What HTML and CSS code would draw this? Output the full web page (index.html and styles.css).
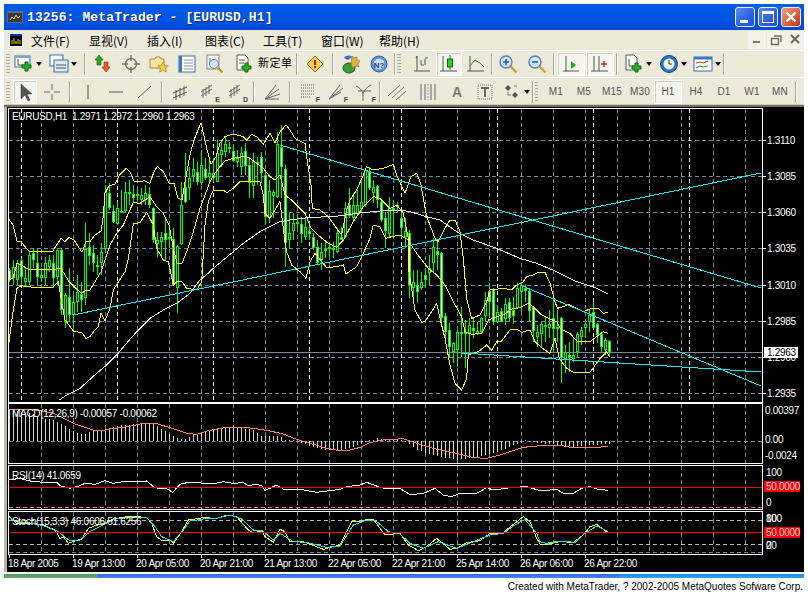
FILE: index.html
```html
<!DOCTYPE html>
<html lang="zh">
<head>
<meta charset="utf-8">
<title>MetaTrader</title>
<link rel="stylesheet" href="styles.css">
</head>
<body>
<div class="win">
  <header class="titlebar">
    <svg class="ti" viewBox="0 0 16 16"><rect x="0" y="2" width="16" height="12" fill="#5a6a80"/><rect x="1" y="4" width="14" height="9" fill="#3a3a3a"/><path d="M3 11l2-3 2 2 2-4 2 3 2-2" stroke="#e8c850" fill="none"/></svg>
    <span class="ttext">13256: MetaTrader - [EURUSD,H1]</span>
    <span class="tbtns">
      <span class="tb"><i class="tmin"></i></span>
      <span class="tb"><i class="tmax"></i></span>
      <span class="tb tclose"><svg viewBox="0 0 20 20"><path d="M5 5l10 10M15 5L5 15" stroke="#fff" stroke-width="2.6"/></svg></span>
    </span>
  </header>

  <nav class="menu">
    <svg class="mi" viewBox="0 0 14 14"><rect width="14" height="14" fill="#fff"/><rect x="1" y="1" width="12" height="12" fill="#000"/><rect x="1" y="1" width="12" height="2" fill="#1030c0"/><path d="M3 11V7M5 11V5M7 11V8M9 11V6M11 11V7" stroke="#f0d000"/></svg>
    <span class="mn">文件(F)</span><span class="mn">显视(V)</span><span class="mn">插入(I)</span><span class="mn">图表(C)</span><span class="mn">工具(T)</span><span class="mn">窗口(W)</span><span class="mn">帮助(H)</span>
    <span class="mctl">
      <span class="mb"><svg viewBox="0 0 18 17"><rect x="5" y="10" width="7" height="2" fill="#7d7d72"/></svg></span>
      <span class="mb"><svg viewBox="0 0 18 17"><path d="M7 5h7v6M4.500 7.500h7v6h-7z" fill="none" stroke="#6d6d62" stroke-width="1.400"/></svg></span>
      <span class="mb"><svg viewBox="0 0 18 17"><path d="M5 4l8 8M13 4l-8 8" stroke="#6d6d62" stroke-width="2.200"/></svg></span>
    </span>
  </nav>

  <div class="bar bar1">
    <span class="grip"></span>
    <span class="t d36"><svg viewBox="0 0 20 20"><rect x="1" y="2" width="15" height="11" fill="#fff" stroke="#3a6ea5"/><rect x="1" y="2" width="15" height="2" fill="#7aa7d8"/><path d="M4 5v6h7" stroke="#444" fill="none"/><path d="M11 8h3v3h3v3h-3v3h-3v-3H8v-3h3z" fill="#22b522" stroke="#0a6a0a"/></svg><i class="arr"></i></span>
    <span class="t d34"><svg viewBox="0 0 20 20"><rect x="1" y="1" width="13" height="11" fill="#fff" stroke="#3a6ea5"/><rect x="5" y="6" width="14" height="12" fill="#dce9f7" stroke="#3a6ea5"/><path d="M7 11h10M7 14h10" stroke="#555"/></svg><i class="arr"></i></span>
    <span class="sep s8"></span>
    <span class="t"><svg viewBox="0 0 20 20"><path d="M6 1l4 5H8v5H4V6H2z" fill="#22a822" stroke="#0a5a0a" stroke-width=".6"/><path d="M13 18l-4-5h2V8h4v5h2z" fill="#e85a2a" stroke="#8a2a0a" stroke-width=".6"/></svg></span>
    <span class="t"><svg viewBox="0 0 20 20"><circle cx="10" cy="10" r="5.500" fill="none" stroke="#77776a" stroke-width="1.500"/><path d="M10 1v6M10 13v6M1 10h6M13 10h6" stroke="#77776a" stroke-width="1.500"/></svg></span>
    <span class="t"><svg viewBox="0 0 20 20"><path d="M1 5h5l1-2h4l1 2h3v9H1z" fill="#f4e6a2" stroke="#a08a3a"/><path d="M14 8l1.600 3.500 3.700.4-2.800 2.400.9 3.700-3.400-2-3.400 2 .9-3.700-2.800-2.400 3.700-.4z" fill="#f0d040" stroke="#a08a20" stroke-width=".7"/></svg></span>
    <span class="t"><svg viewBox="0 0 20 20"><rect x="2" y="2" width="16" height="16" fill="#fff" stroke="#3a6ea5"/><rect x="2" y="2" width="3" height="16" fill="#3a78c8"/><path d="M7 6h9M7 9h9M7 12h9M7 15h9" stroke="#7a90b0"/></svg></span>
    <span class="t"><svg viewBox="0 0 20 20"><rect x="2" y="1" width="12" height="14" fill="#f4f4f0" stroke="#8a8a80"/><path d="M5 4v7h7" stroke="#777" fill="none"/><circle cx="9" cy="10" r="4.500" fill="#cfe4f8" stroke="#6a84a0"/><path d="M12.500 13.500l5 5" stroke="#b8962a" stroke-width="2.200"/></svg></span>
    <span class="t tn"><svg viewBox="0 0 20 20"><path d="M3 1h8l3 3v12H3z" fill="#fff" stroke="#555"/><path d="M5 6h6M5 9h5" stroke="#555"/><path d="M11 9h3v3h3v3h-3v3h-3v-3H8v-3h3z" fill="#22b522" stroke="#0a6a0a"/></svg></span>
    <span class="newo">新定单</span>
    <span class="sep s8"></span>
    <span class="t"><svg viewBox="0 0 20 20"><path d="M10 2l8 8-8 8-8-8z" fill="#f4cc50" stroke="#8a6a1a"/><rect x="9" y="6" width="2" height="5" fill="#a02010"/><rect x="9" y="12" width="2" height="2" fill="#a02010"/></svg></span>
    <span class="sep s8"></span>
    <span class="t"><svg viewBox="0 0 20 20"><ellipse cx="8" cy="14" rx="6" ry="5" fill="#3a9a3a" stroke="#1a5a1a"/><path d="M11 2l2 2 3-1 0 3 3 1-2 3 1 3-3-1-3 2-2-4z" fill="#e0b040" stroke="#8a6a1a" stroke-width=".6"/><path d="M3 4c2-3 6-3 8-1l-4 3z" fill="#3a70c0"/></svg></span>
    <span class="t"><svg viewBox="0 0 20 20"><circle cx="10" cy="10" r="8" fill="#5a8ed8" stroke="#3a68b0"/><circle cx="10" cy="10" r="5.500" fill="#c8dcf4"/><text x="10" y="13.500" class="help">N?</text></svg></span>
    <span class="sep s4"></span><span class="grip g2"></span>
    <span class="t"><svg viewBox="0 0 20 20"><path d="M5 2v15M2 17h16M5 2l-1 2M13 5v6" stroke="#555" fill="none"/><path d="M9 6v5h3M13 4h3" stroke="#2a8a2a" fill="none"/></svg></span>
    <span class="t w26 on"><svg viewBox="0 0 20 20"><path d="M4 2v15M1 17h17" stroke="#555" fill="none"/><path d="M11 1v15" stroke="#0a7a0a"/><rect x="8.500" y="5" width="5" height="8" fill="#22d822" stroke="#0a6a0a"/></svg></span>
    <span class="t"><svg viewBox="0 0 20 20"><path d="M4 2v15M1 17h17" stroke="#555" fill="none"/><path d="M4 12l5-6 5 3 4 4" stroke="#2a8a2a" fill="none"/></svg></span>
    <span class="sep s4"></span>
    <span class="t"><svg viewBox="0 0 20 20"><circle cx="8" cy="8" r="6" fill="#cfe4f8" stroke="#5a80b0" stroke-width="1.400"/><path d="M5 8h6M8 5v6" stroke="#2a5aa0" stroke-width="1.600"/><path d="M12.500 12.500l6 6" stroke="#c8a030" stroke-width="2.400"/></svg></span>
    <span class="t tg"><svg viewBox="0 0 20 20"><circle cx="8" cy="8" r="6" fill="#cfe4f8" stroke="#5a80b0" stroke-width="1.400"/><path d="M5 8h6" stroke="#2a5aa0" stroke-width="1.600"/><path d="M12.500 12.500l6 6" stroke="#c8a030" stroke-width="2.400"/></svg></span>
    <span class="sep s6"></span>
    <span class="t on"><svg viewBox="0 0 20 20"><path d="M5 2v15M2 17h16" stroke="#555" fill="none"/><path d="M10 7l5 4-5 4z" fill="#22a022"/></svg></span>
    <span class="t on tg"><svg viewBox="0 0 20 20"><path d="M4 2v15M1 17h17M9 2v15" stroke="#555" fill="none"/><path d="M11 10h6M14 7v6" stroke="#c03010" stroke-width="1.400"/></svg></span>
    <span class="sep s6"></span>
    <span class="t d35"><svg viewBox="0 0 20 20"><path d="M2 1h8l3 3v12H2z" fill="#fff" stroke="#555"/><path d="M5 5v7h5" stroke="#555" fill="none"/><path d="M11 9h3v3h3v3h-3v3h-3v-3H8v-3h3z" fill="#22b522" stroke="#0a6a0a"/></svg><i class="arr"></i></span>
    <span class="t d35"><svg viewBox="0 0 20 20"><circle cx="10" cy="10" r="8.500" fill="#2a6ec8" stroke="#1a4a90"/><circle cx="10" cy="10" r="5.500" fill="#f2f2ea"/><path d="M10 6v4h3" stroke="#333" fill="none"/></svg><i class="arr"></i></span>
    <span class="t d32"><svg viewBox="0 0 20 20"><rect x="1" y="3" width="18" height="14" fill="#fff" stroke="#3a6ea5"/><rect x="1" y="3" width="18" height="2.500" fill="#3a78c8"/><path d="M3 9l4-1 3 1 5-2" stroke="#c04020" fill="none"/><path d="M3 14l4-2 3 1 5-1" stroke="#2a9a2a" fill="none"/></svg><i class="arr"></i></span>
    <span class="sep s4"></span>
  </div>

  <div class="bar bar2">
    <span class="grip"></span>
    <span class="t cur sel"><svg viewBox="0 0 20 20"><path d="M6 2v15l4-4 3 6 2-1-3-6h5z" fill="#555" stroke="#333" stroke-width=".5"/></svg></span>
    <span class="t"><svg viewBox="0 0 20 20"><path d="M10 2v6M10 12v6M2 10h6M12 10h6" stroke="#666"/></svg></span>
    <span class="sep s8"></span>
    <span class="t"><svg viewBox="0 0 20 20"><path d="M10 3v14" stroke="#555"/></svg></span>
    <span class="t"><svg viewBox="0 0 20 20"><path d="M3 10h14" stroke="#555"/></svg></span>
    <span class="t"><svg viewBox="0 0 20 20"><path d="M4 16L17 4" stroke="#666"/></svg></span>
    <span class="sep s8"></span>
    <span class="t"><svg viewBox="0 0 20 20"><path d="M3 16l14-6M3 11l14-6M6 8v10M10 6v10M14 4v10" stroke="#555" fill="none"/></svg></span>
    <span class="t"><svg viewBox="0 0 20 20"><path d="M3 14l11-7M3 10l11-7M5 7v9M8 5v9M11 3v9" stroke="#666" fill="none"/></svg><b class="sub">E</b></span>
    <span class="t"><svg viewBox="0 0 20 20"><path d="M3 14l11-7M3 10l11-7M5 7v9M8 5v9M11 3v9" stroke="#666" fill="none"/></svg><b class="sub">D</b></span>
    <span class="sep s8"></span>
    <span class="t"><svg viewBox="0 0 20 20"><path d="M3 17L14 3M3 17L17 7M3 17l15-5M3 17h14" stroke="#666" fill="none"/></svg></span>
    <span class="sep s8"></span>
    <span class="t"><svg viewBox="0 0 20 20"><path d="M3 3h14M3 6h14M3 9h14M3 12h14M3 15h10" stroke="#666" stroke-dasharray="1 1"/></svg><b class="sub">F</b></span>
    <span class="t"><svg viewBox="0 0 20 20"><path d="M3 17L14 3M3 17L17 6M3 17l12-7" stroke="#666" fill="none"/></svg><b class="sub">F</b></span>
    <span class="t"><svg viewBox="0 0 20 20"><path d="M2 4c3 1 6 4 7 8M17 3c-4 2-7 5-8 9M9 12v7M4 9l13 0" stroke="#666" fill="none"/></svg><b class="sub">F</b></span>
    <span class="sep s4"></span>
    <span class="t"><svg viewBox="0 0 20 20"><path d="M2 14L14 3M6 16L18 5M10 18L20 9" stroke="#777" fill="none"/></svg></span>
    <span class="t w36"><svg viewBox="0 0 20 20"><path d="M3 2v16M7 2v16M13 2v16M17 2v16" stroke="#666"/><path d="M10 2v16" stroke="#999" stroke-dasharray="2 1"/></svg></span>
    <span class="t glyphA">A</span>
    <span class="t"><svg viewBox="0 0 20 20"><rect x="3" y="3" width="14" height="14" fill="none" stroke="#777" stroke-dasharray="1 1"/><path d="M6 6h8M10 6v9" stroke="#666" stroke-width="2"/></svg></span>
    <span class="t d26"><svg viewBox="0 0 20 20"><path d="M3 6l3-3 3 3-3 3z" fill="#555"/><path d="M10 13l3-3 3 3-3 3z" fill="#555"/><path d="M6 10v3h3M12 4h3" stroke="#777" fill="none"/></svg><i class="arr"></i></span>
    <span class="sep s4"></span><span class="grip g3"></span>
    <span class="pd">M1</span><span class="pd">M5</span><span class="pd">M15</span><span class="pd">M30</span><span class="pd sel">H1</span><span class="pd">H4</span><span class="pd">D1</span><span class="pd">W1</span><span class="pd">MN</span>
    <span class="sep s4"></span>
  </div>

  <section class="chart"><svg id="plot" class="plot" viewBox="4 105 800 469"></svg></section>
  <div class="strip"><span class="st1"></span><span class="st2"></span><span class="st3"></span></div>
</div>
<footer class="status">Created with MetaTrader, ? 2002-2005 MetaQuotes Sofware Corp.</footer>
<script src="script.js"></script>
</body>
</html>
```
FILE: styles.css
```css
html,body{margin:0;padding:0;background:#fff;overflow:hidden;height:594px}
body{font-family:"Liberation Sans",sans-serif;font-size:11px;color:#000}
.win{margin:4px 4px 0;width:800px}
.titlebar{height:26px;display:flex;align-items:center;background:linear-gradient(#0a5ee6 0,#0058e6 20%,#0054e2 60%,#0048d6 100%);color:#fff;padding-left:3px;box-sizing:border-box}
.ti{width:16px;height:16px;margin-right:4px}
.ttext{font:bold 13px "Liberation Mono",monospace;letter-spacing:.12px;white-space:pre;text-shadow:1px 1px 0 #0a2a9a}
.tbtns{margin-left:auto;display:flex;gap:3px;padding-right:3px}
.tb{width:20px;height:20px;box-sizing:border-box;border:1px solid #e8eefc;border-radius:3px;background:linear-gradient(135deg,#5c8cf0,#2a5fe0 60%,#2050d0);position:relative;display:block}
.tclose{background:linear-gradient(135deg,#f0a080,#e0603a 55%,#c83010)}
.tclose svg{width:18px;height:18px;display:block}
.tmin{position:absolute;left:4px;bottom:3px;width:8px;height:3px;background:#fff}
.tmax{position:absolute;left:3px;top:3px;width:12px;height:12px;box-sizing:border-box;border:1px solid #fff;border-top-width:3px}
.menu{height:20px;display:flex;align-items:center;background:#ece9d8;padding-left:5px;box-sizing:border-box}
.mi{width:14px;height:14px;margin-right:8px}
.mn{width:58px;font:12px "Noto Sans CJK SC","Liberation Sans",sans-serif;white-space:pre}
.mctl{margin-left:auto;display:flex;gap:1px}
.mb{width:18px;height:18px;background:#f4f2e8;border:0 solid #fff;display:block}
.mb svg{display:block;width:18px;height:17px}
.bar{display:flex;align-items:center;background:#ece9d8;box-sizing:border-box;border-top:1px solid #fff}
.bar1{height:27px}
.bar2{height:28px;box-shadow:inset 0 -1px 0 #d0ccb8}
.grip{width:4px;height:20px;margin:0 0 0 2px;background:repeating-linear-gradient(#b0ac98 0 1px,#ece9d8 1px 3px)}
.g2{margin-left:0;width:4px;margin-right:7px}
.g3{margin:0 4px 0 0;width:3px}
.t{position:relative;width:28px;height:24px;display:flex;align-items:center;justify-content:center;flex:none;box-sizing:border-box}
.t svg{width:20px;height:20px;flex:none}
.tg{margin-left:1px}
.w26{width:26px}
.cur{width:24px;margin:0 1px 0 3px}
.w36{width:30px;margin-left:3px}
.d36{width:36px;justify-content:flex-start;padding-left:4px}
.d34{width:35px;justify-content:flex-start;padding-left:3px}
.d35{width:35px;justify-content:flex-start;padding-left:4px}
.d32{width:32px;justify-content:flex-start;padding-left:3px}
.d26{width:32px;justify-content:flex-start;padding-left:3px}
.tn{width:28px;margin-left:1px}
.arr{width:0;height:0;border:3.500px solid transparent;border-top:4px solid #000;border-bottom:0;margin-left:2px}
.sep{flex:none;height:22px;background:linear-gradient(90deg,#aca899 0 1px,#fff 1px 2px,transparent 2px);background-repeat:no-repeat;background-position:center}
.s8{width:8px;background-size:2px 100%}
.s4{width:4px;background-size:2px 100%}
.s6{width:6px;background-size:2px 100%}
.on,.sel{background:#f5f4ed;border:1px solid #fff;box-shadow:inset 1px 1px 0 #cfccbc}
.newo{width:35px;font:11px "Noto Sans CJK SC",sans-serif;letter-spacing:.5px;flex:none;margin-top:-4px}
.help{font:bold 8px "Liberation Sans",sans-serif;fill:#1a3a80;text-anchor:middle}
.sub{position:absolute;right:2px;bottom:1px;font:bold 7px "Liberation Sans",sans-serif;color:#444}
.glyphA{font:bold 14px "Liberation Sans",sans-serif;color:#777}
.pd{width:28px;height:24px;flex:none;box-sizing:border-box;display:flex;align-items:center;justify-content:center;font:10px "Liberation Sans",sans-serif;color:#555;letter-spacing:.2px}
.chart{height:469px;background:#000}
.plot{display:block;width:800px;height:469px;shape-rendering:crispEdges}
.lbl{font:10px "Liberation Sans",sans-serif;fill:#fff;letter-spacing:-.3px;white-space:pre}
.lbl-dark{fill:#000}
.lbl-red{fill:#f2d0d0}
.strip{height:4px;display:flex}
.st1{width:94px;background:linear-gradient(#4a9a50,#6aaa70)}
.st2{width:521px;background:linear-gradient(#2a6ae0,#4a88e8)}
.st3{flex:1;background:linear-gradient(#1a88e0,#3aa0ea)}
.status{height:16px;text-align:right;padding-right:5px;font:10px/18px "Liberation Sans",sans-serif;white-space:pre}
```
FILE: script.js
```js
var NS = 'http://www.w3.org/2000/svg';
var svg = document.getElementById('plot');
function el(n, a, txt) {
  var e = document.createElementNS(NS, n);
  for (var k in a) e.setAttribute(k, a[k]);
  if (txt !== undefined) e.textContent = txt;
  svg.appendChild(e);
  return e;
}
function line(x1, y1, x2, y2, c, dash) {
  var a = { x1: x1, y1: y1, x2: x2, y2: y2, stroke: c };
  if (dash) a['stroke-dasharray'] = dash;
  el('line', a);
}
function path(pts, c) {
  el('polyline', { points: pts.map(function (p) { return p[0] + ',' + p[1]; }).join(' '), fill: 'none', stroke: c });
}
/* read a trace in zoomed-crop coordinates: origin (ox,oy), 3x */
function build(segs) {
  var out = [], last = -1;
  segs.forEach(function (s) {
    s[2].trim().split(/\s+/).forEach(function (t) {
      var q = t.split(','), x = s[0] + q[0] / 3, y = s[1] + q[1] / 3;
      if (x > last) { out.push([x, y]); last = x; }
    });
  });
  return out;
}
function interp(pts, x) {
  if (x <= pts[0][0]) return pts[0][1];
  for (var i = 1; i < pts.length; i++) {
    if (x <= pts[i][0]) {
      var a = pts[i - 1], b = pts[i];
      return a[1] + (b[1] - a[1]) * (x - a[0]) / (b[0] - a[0]);
    }
  }
  return pts[pts.length - 1][1];
}

var GRID = '#778899', D = '4 3';
var L = 8, R = 762;

/* chrome */
el('rect', { x: 4, y: 105, width: 800, height: 2, fill: '#716f64' });
el('rect', { x: 4, y: 107, width: 3, height: 465, fill: '#b8b5a6' });
el('rect', { x: 4, y: 572, width: 800, height: 2, fill: '#fff' });

var panels = [[108, 402], [403, 463], [465, 509], [511, 554]];
var yGrid = [140, 176, 212, 248, 285, 321, 357, 393];

/* vertical + horizontal grid */
panels.forEach(function (p) {
  for (var x = 41; x < R; x += 32) line(x + .5, p[0] + 1, x + .5, p[1], GRID, D);
});
yGrid.forEach(function (y) { line(L + 1, y + .5, R, y + .5, GRID, D); });
[21, 117, 213, 309, 401, 497, 593, 689].forEach(function (x) { line(x + .5, 109, x + .5, 402, '#fff', D); });
line(L + 1, 441, R, 441, GRID, D);
line(L + 1, 520.5, R, 520.5, '#b8b8b8', D);
line(L + 1, 544.5, R, 544.5, '#b8b8b8', D);
line(L + 1, 552.5, R, 552.5, GRID, D);
line(L + 1, 507.5, R, 507.5, '#ff7f50', D);
line(L + 1, 352.5, R, 352.5, GRID);

/* candles: top,bottom,high,low,white (crop y; origin 125, 3x) */
var C = '435,465,430,470,1 425,460,405,480,0 415,465,405,480,0 405,455,400,480,1 460,472,425,485,0 390,470,380,480,0 385,405,370,430,1 415,455,370,480,1 450,460,430,470,0 415,460,395,480,0 405,425,390,440,0 415,460,390,490,1 375,455,370,480,0 375,555,370,570,1 510,590,505,610,0 515,570,430,590,1 530,570,510,605,0 500,530,450,560,0 508,525,470,560,1 372,518,295,540,0 366,392,325,420,1 385,415,360,440,1 420,424,390,450,0 382,415,355,450,0 200,372,180,380,0 203,250,175,255,1 258,290,240,295,1 250,296,230,300,0 258,262,195,265,1 202,258,170,265,0 200,204,165,240,1 208,218,180,230,1 208,212,190,225,1 210,225,190,240,0 203,225,180,240,0 208,240,185,250,1 250,345,245,355,1 345,358,320,395,0 335,350,320,400,0 325,345,280,405,1 335,338,310,370,1 343,480,310,480,1 362,490,360,565,0 240,358,170,360,0 185,232,85,235,1 160,190,125,225,0 133,152,100,170,0 142,170,110,180,1 120,175,75,180,0 ' +
  '133,160,100,165,1 145,155,100,170,0 143,160,100,170,0 85,170,45,170,0 75,90,45,125,0 57,82,35,95,0 66,69,50,85,1 77,107,60,110,1 100,110,75,125,0 85,125,65,150,0 77,122,55,150,1 120,175,95,220,1 107,182,85,220,0 110,115,95,180,0 97,145,80,175,1 150,277,145,300,1 198,280,165,295,0 202,212,195,280,0 58,217,20,220,0 65,125,0,220,1 133,355,120,425,1 325,345,265,370,0 295,318,265,345,0 290,295,270,310,0 298,328,275,355,1 307,335,275,345,0 317,327,290,345,1 335,370,325,375,1 365,415,345,420,1 382,405,355,435,0 372,378,350,400,0 367,373,355,395,0 370,373,350,400,0 325,382,310,385,0 335,345,305,345,1 250,335,230,340,0 240,272,190,280,1 240,280,205,285,0 240,268,195,270,0 232,252,165,265,0 135,240,130,245,0 140,190,125,195,1 185,205,165,235,0 182,225,180,250,1 232,285,225,290,1 280,317,260,370,1 250,327,215,335,0 250,255,225,340,0 240,245,230,260,0 280,308,255,340,1 317,335,280,370,0 325,480,315,520,1 ' +
  '470,490,435,520,0 480,500,435,530,1 470,490,440,495,0 450,465,430,490,1 430,445,390,480,0 367,415,340,445,0 378,390,345,435,1 385,580,380,590,1 572,620,565,640,1 615,665,595,700,1 655,680,650,715,0 620,675,615,725,0 620,625,545,695,0 620,625,585,730,0 600,625,580,680,0 608,618,580,640,1 617,628,590,630,0 580,620,575,625,0 525,572,500,590,0 497,530,475,580,1 492,590,490,600,1 560,590,540,592,0 558,590,550,590,1 538,582,520,600,0 532,580,520,590,1 555,572,515,598,1 490,548,475,550,0 480,502,475,560,0 490,498,478,530,1 498,557,490,590,1 547,618,545,650,1 620,635,600,665,0 598,628,590,670,0 600,606,575,650,0 597,608,555,640,0 580,612,530,680,1 605,610,555,650,0 580,700,575,775,1 682,702,660,745,0 690,698,650,740,1 690,702,640,710,0 628,680,622,695,0 616,636,605,660,0 598,610,590,640,0 570,592,555,620,0 560,608,530,610,1 598,630,595,655,1 628,665,625,680,1 645,675,640,690,0 647,680,645,695,1';
var wick = '', body = '', inW = '', inB = '';
C.split(' ').forEach(function (s, k) {
  var v = s.split(',');
  var t = Math.round(125 + v[0] / 3), b = Math.round(125 + v[1] / 3);
  var h = Math.round(125 + v[2] / 3), l = Math.round(125 + v[3] / 3);
  var x = 9 + 4 * k, bh = Math.max(b - t, 2);
  wick += 'M' + (x + .5) + ' ' + h + 'V' + l;
  body += 'M' + (x - 1) + ' ' + t + 'h3v' + bh + 'h-3z';
  if (bh > 2) {
    var r = 'M' + x + ' ' + (t + 1) + 'h1v' + (bh - 2) + 'h-1z';
    if (v[4] === '1') inW += r; else inB += r;
  }
});
el('path', { d: wick, stroke: '#00ff00', fill: 'none' });
el('path', { d: body, fill: '#00ff00' });
el('path', { d: inW, fill: '#fff' });
el('path', { d: inB, fill: '#000' });

/* bands */
var upper = build([
  [0, 125, '27,283 39,300 51,348 63,350 75,365 87,378 159,378 165,368 183,340 195,350 207,337 222,345 232,360 246,382 258,350 270,350 285,330 303,318 309,280 315,205 327,182 345,178 357,152 378,130 390,140 402,168 420,170 432,167 450,175 462,140 472,125 490,140 507,175 522,175 534,220 546,225 558,155 570,90 582,45 603,-7'],
  [200, 125, '20,70 33,118 48,95 60,55 75,35 100,27 130,35 140,45 155,28 170,35 190,58 210,25 225,55 240,20 258,0 270,15 285,40 315,55 322,110 333,180 337,250 360,255 385,275 410,310 425,330 440,255 450,225 470,195 490,150 500,125 520,135 550,130 580,118 590,150 615,205'],
  [400, 125, '33,155 50,145 62,175 80,275 90,300 105,340 115,350 135,310 150,285 165,285 180,320 190,400 200,520 215,580 240,570 260,530 270,495 310,490 335,495 350,480 370,470 380,455 400,450 415,442 435,442 450,475 465,530 472,550 490,545 505,538 520,545 550,560 575,550 595,550 610,565 625,562']
]);
var middle = build([
  [0, 125, '27,465 39,460 51,415 63,420 85,433 159,433 183,430 195,450 207,470 222,485 245,505 258,495 270,495 285,470 303,440 315,405 330,360 350,325 370,300 385,265 400,233 420,235 450,215 470,245 490,265 507,300 520,370 531,415 546,415 560,380 580,320 600,250 615,210'],
  [200, 125, '30,170 45,145 60,125 75,108 100,100 120,97 135,93 150,100 170,115 190,130 210,155 225,165 240,150 255,210 275,225 295,245 315,265 333,310 360,335 385,355 410,367 430,345 460,290 490,245 520,215 540,220 570,250 590,240 610,265'],
  [400, 125, '27,350 50,385 85,430 110,450 135,480 160,530 185,575 195,620 215,628 245,625 265,585 290,575 310,570 335,552 360,548 385,535 400,545 425,570 445,580 470,590 480,610 510,625 530,648 570,650 590,635 610,620 625,625']
]);
var lower = build([
  [0, 125, '27,650 39,560 51,490 63,482 99,487 159,487 175,470 183,520 195,585 207,600 222,620 245,622 258,640 270,635 285,615 295,605 303,565 315,587 330,550 340,495 375,440 385,400 400,297 420,293 440,262 460,300 470,370 490,405 505,410 520,480 531,470 546,470 560,490 590,495 605,470'],
  [200, 125, '3,460 15,300 25,230 40,195 70,195 80,203 100,190 120,170 180,170 190,210 195,265 210,280 225,255 240,230 255,350 260,380 275,420 300,440 318,460 330,410 345,385 380,428 410,425 430,420 438,447 470,425 490,385 510,340 520,300 540,305 557,340 575,335 600,330 625,345'],
  [400, 125, '27,440 45,555 65,592 75,590 95,560 110,535 120,580 135,640 150,720 165,775 185,795 200,760 205,690 235,680 260,660 275,675 290,650 305,648 330,615 350,612 365,622 390,615 405,650 430,672 450,685 465,640 478,700 500,730 520,742 570,742 600,700 620,680 628,695']
]);
path(upper, '#ffff00'); path(middle, '#ffff00'); path(lower, '#ffff00');

/* long moving average */
path(build([
  [0, 125, '178,825 200,810 240,790 290,745 320,720 350,690 375,660 410,620 450,580 490,555 530,535 570,505 600,465 630,440'],
  [200, 125, '40,430 70,405 100,380 130,355 180,320 240,290 290,282 330,277 400,275 470,265 540,258 600,255'],
  [400, 125, '30,260 80,275 120,285 170,320 220,345 290,370 360,400 410,415 470,440 530,470 590,490 625,507']
]), '#e8e8e8');

/* trend lines */
var CY = '#12ecf0';
line(73, 315, 761, 173, CY);
line(280, 145, 761, 288, CY);
line(520, 285, 761, 386, CY);
line(462, 353, 761, 372, CY);

/* MACD */
var mv = build([
  [0, 395, '27,45 60,50 100,58 130,70 160,75 190,90 220,110 250,118 270,110 300,105 340,95 370,90 400,88 430,86 460,88 490,105 520,125 550,135 580,120 610,108 640,105 670,100 700,97 730,100 760,105'],
  [260, 400, '0,108 60,108 75,121 110,125 150,138 200,150 240,150 280,140 320,125 350,115 380,121 430,121 470,150 520,165 590,180 650,170 700,160 750,140 790,122 840,130'],
  [540, 395, '0,150 60,150 100,155 150,150 205,147']
]);
var bars = '';
for (var k = 0; k <= 150; k++) {
  var bx = 9 + 4 * k;
  var vy = Math.round(interp(mv, bx));
  if (vy === 441) vy = 440;
  bars += 'M' + (bx + .5) + ' ' + Math.min(vy, 441) + 'V' + Math.max(vy, 441);
}
el('path', { d: bars, stroke: '#d4d4d4', fill: 'none' });
path(build([
  [0, 395, '27,42 60,42 90,43 120,47 160,55 190,70 220,85 250,95 280,105 310,107 340,100 370,97 400,92 430,85 470,86 500,95 530,105 560,115 590,118 620,108 650,102 680,97 730,97 760,100'],
  [260, 400, '0,88 30,93 70,102 110,118 150,130 200,145 240,152 270,150 300,142 330,128 370,120 430,116 470,130 520,145 580,158 640,173 680,175 720,165 790,142 840,137'],
  [540, 395, '0,150 60,150 90,157 130,157 175,157 205,153']
]), '#fa8072');

/* RSI */
path(build([
  [0, 395, '27,255 60,250 90,258 130,262 170,262 180,272 190,275 210,280 240,272 255,265 285,268 315,257 340,265 370,260 440,258 460,275 475,281 500,281 518,292 540,268 565,262 640,266 670,260 700,265 730,263 745,272 770,268 785,272'],
  [260, 400, '0,258 15,272 50,255 75,270 120,268 170,277 240,268 260,260 300,255 320,247 360,262 380,267 420,265 450,284 490,280 525,265 550,285 575,290 600,280 650,280 680,263 700,270 760,262 800,260 840,272'],
  [540, 395, '0,287 30,285 50,283 70,295 100,295 125,280 150,275 170,282 205,286']
]), '#f4f4f4');
line(10, 487.5, R, 487.5, '#ff0000');

/* Stochastic */
path(build([
  [0, 395, '27,365 50,385 100,385 130,390 165,405 180,430 190,425 205,445 220,440 245,432 265,400 285,392 315,385 340,372 385,364 440,367 455,385 470,425 485,436 510,436 520,445 545,410 565,375 610,368 650,370 680,360 710,365 745,405 760,413 785,408'],
  [260, 400, '0,390 15,410 40,427 60,388 75,395 90,425 130,425 190,448 240,435 275,365 300,365 320,358 340,358 375,405 420,400 445,435 475,452 500,440 530,415 570,448 590,445 620,428 660,422 690,400 730,400 745,385 790,350 810,365 830,415 840,432'],
  [540, 395, '0,445 20,448 60,440 100,442 130,420 150,395 170,388 205,415']
]), '#ffff00');
path(build([
  [0, 395, '27,368 50,380 100,385 130,392 175,410 210,438 240,435 270,410 300,395 320,385 345,372 385,368 440,368 465,395 485,425 520,440 550,405 570,378 610,372 650,370 690,360 725,372 760,405 785,405'],
  [260, 400, '0,392 40,420 60,400 100,425 140,427 200,442 240,438 280,375 320,360 345,360 385,395 420,402 450,430 490,445 535,425 590,445 640,425 690,405 730,400 760,378 795,358 830,400 840,425'],
  [540, 395, '0,432 20,445 60,438 105,442 135,415 170,393 205,410']
]), CY);
line(10, 532.5, R, 532.5, '#ff0000');

/* panel frames */
panels.forEach(function (p) {
  el('rect', { x: L + .5, y: p[0] + .5, width: R - L, height: p[1] - p[0], fill: 'none', stroke: '#fff' });
});

/* labels */
function text(x, y, s, cls) { return el('text', { x: x, y: y, 'class': cls || 'lbl' }, s); }
text(12, 120, 'EURUSD,H1  1.2971 1.2972 1.2960 1.2963');
text(12, 417, 'MACD(12,26,9) -0.00057 -0.00062');
text(12, 479, 'RSI(14) 41.0659');
text(12, 525, 'Stoch(15,3,3) 46.0606 51.6256');

[['1.3110', 140], ['1.3085', 176], ['1.3060', 212], ['1.3035', 248], ['1.3010', 285], ['1.2985', 321], ['1.2960', 357], ['1.2935', 393]].forEach(function (p) {
  line(R, p[1] + .5, R + 4, p[1] + .5, '#fff');
  text(767, p[1] + 4, p[0]);
});
el('rect', { x: 764, y: 347, width: 34, height: 11, fill: '#fff' });
text(767, 356, '1.2963', 'lbl lbl-dark');

text(765, 414, '0.00397');
text(765, 443, '0.00');
text(765, 459, '-0.0024');
text(766, 476, '100');
text(766, 506, '0');
text(766, 522, '100');
text(766, 522, '80');
text(766, 549, '20');
text(766, 549, '0');
[[481, 490], [527, 536]].forEach(function (p) {
  el('rect', { x: 764, y: p[0], width: 36, height: 11, fill: '#ff0000' });
  text(766, p[1], '50.0000', 'lbl lbl-red');
});

[['18 Apr 2005', 9], ['19 Apr 13:00', 73], ['20 Apr 05:00', 137], ['20 Apr 21:00', 201], ['21 Apr 13:00', 265], ['22 Apr 05:00', 329], ['22 Apr 21:00', 393], ['25 Apr 14:00', 457], ['26 Apr 06:00', 521], ['26 Apr 22:00', 585]].forEach(function (p) {
  line(p[1] + .5, 554, p[1] + .5, 558, '#fff');
  text(p[1] - 1, 567, p[0]);
});
```
